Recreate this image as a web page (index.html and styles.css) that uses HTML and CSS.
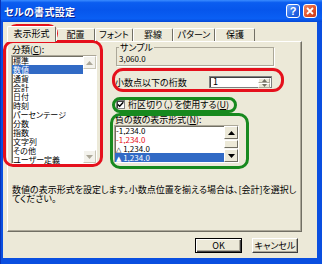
FILE: index.html
```html
<!DOCTYPE html>
<html lang="ja">
<head>
  <meta charset="UTF-8">
  <title>セルの書式設定</title>
  <link rel="stylesheet" href="styles.css">
</head>
<body>
  <div class="window">
    <div class="titlebar">
      <span class="title">セルの書式設定</span>
      <span class="tbtn help">?</span>
      <span class="tbtn close">
        <svg width="8" height="8" viewBox="0 0 8 8"><path d="M1 1L7 7M7 1L1 7" stroke="#fff" stroke-width="1.8"/></svg>
      </span>
    </div>
    <div class="client">
      <div class="tabs">
        <div class="tab active">表示形式</div>
        <div class="tab">配置</div>
        <div class="tab">フォント</div>
        <div class="tab">罫線</div>
        <div class="tab">パターン</div>
        <div class="tab">保護</div>
      </div>
      <div class="panel">
        <div class="cols">
          <div class="category">
            <div class="label">分類(<u>C</u>):</div>
            <div class="listbox cat-list">
              <ul class="items">
                <li>標準</li>
                <li class="sel">数値</li>
                <li>通貨</li>
                <li>会計</li>
                <li>日付</li>
                <li>時刻</li>
                <li>パーセンテージ</li>
                <li>分数</li>
                <li>指数</li>
                <li>文字列</li>
                <li>その他</li>
                <li>ユーザー定義</li>
              </ul>
              <div class="vscroll off">
                <span class="sbtn"><svg width="7" height="4" viewBox="0 0 7 4"><path d="M3.5 0L7 4H0z"/></svg></span>
                <span class="track"></span>
                <span class="sbtn"><svg width="7" height="4" viewBox="0 0 7 4"><path d="M0 0H7L3.5 4z"/></svg></span>
              </div>
            </div>
          </div>
          <div class="options">
            <fieldset class="sample">
              <legend>サンプル</legend>
              <div class="sample-value">3,060.0</div>
            </fieldset>
            <div class="decimal-row">
              <span>小数点以下の桁数</span>
              <div class="spin">
                <span class="spin-value">1</span>
                <span class="spin-btns">
                  <span class="sbtn"><svg width="5" height="3" viewBox="0 0 5 3"><path d="M2.5 0L5 3H0z"/></svg></span>
                  <span class="sbtn"><svg width="5" height="3" viewBox="0 0 5 3"><path d="M0 0H5L2.5 3z"/></svg></span>
                </span>
              </div>
            </div>
            <div class="check-row">
              <span class="checkbox">
                <svg width="7" height="7" viewBox="0 0 7 7"><path d="M0.8 3.4L2.7 5.3L6.3 1.3" fill="none" stroke="#000" stroke-width="1.4"/></svg>
              </span>
              <span>桁区切り（,）を使用する(<u>U</u>)</span>
            </div>
            <div class="neg-label">負の数の表示形式(<u>N</u>):</div>
            <div class="listbox neg-list">
              <ul class="items">
                <li>-1,234.0</li>
                <li class="red">-1,234.0</li>
                <li><span class="tri">△</span> 1,234.0</li>
                <li class="sel"><span class="tri">▲</span> 1,234.0</li>
              </ul>
              <div class="vscroll">
                <span class="sbtn"><svg width="7" height="4" viewBox="0 0 7 4"><path d="M3.5 0L7 4H0z"/></svg></span>
                <span class="track"><span class="thumb"></span></span>
                <span class="sbtn"><svg width="7" height="4" viewBox="0 0 7 4"><path d="M0 0H7L3.5 4z"/></svg></span>
              </div>
            </div>
          </div>
        </div>
        <p class="desc">数値の表示形式を設定します。小数点位置を揃える場合は、[会計]を選択し<br>てください。</p>
      </div>
      <div class="buttons">
        <button class="btn default">OK</button>
        <button class="btn">キャンセル</button>
      </div>
    </div>
    <!-- annotation marks -->
    <div class="mark red mark-tab"></div>
    <div class="mark red mark-list"></div>
    <div class="mark red mark-decimal"></div>
    <div class="mark green mark-check"></div>
    <div class="mark green mark-neg"></div>
  </div>
</body>
</html>
```

FILE: styles.css
```css
* { box-sizing: border-box; }
body { margin: 0; font-family: "Noto Sans CJK JP", "Liberation Sans", sans-serif; font-size: 9px; color: #000; font-feature-settings: "palt"; }
u { text-decoration: underline; }

.window { position: relative; width: 322px; height: 264px; background: #0A4FE0; border-left: 1px solid #0832B8; display: flex; flex-direction: column; overflow: hidden; }
.titlebar { height: 22px; flex: none; display: flex; align-items: center; padding: 0 5px 0 3px; background: linear-gradient(#3A8CFF 0%, #0B5DF0 12%, #0656EC 45%, #0A5FF4 85%, #0447D6 100%); }
.title { flex: 1; color: #fff; font-weight: bold; font-size: 10px; text-shadow: 1px 1px #0A1E8C; letter-spacing: 0.3px; }
.tbtn { width: 14px; height: 14px; border: 1px solid #fff; border-radius: 3px; display: flex; align-items: center; justify-content: center; color: #fff; font: bold 11px "Liberation Sans", sans-serif; margin-left: 3px; }
.help { background: linear-gradient(135deg, #6FA4FF, #2265E6 60%, #1A52D0); }
.close { background: linear-gradient(135deg, #F08A68, #E2532B 55%, #C8381A); }

.client { flex: 1; margin: 0 5px 6px 2px; background: #ECE9D8; padding: 4px 0 0 4px; }

.tabs { display: grid; grid-template-columns: 49px 39px 38px 40px 42px 40px; height: 15px; align-items: end; position: relative; z-index: 1; }
.tab { height: 13px; border: 1px solid; border-color: #fff #716F64 transparent #fff; border-bottom: none; text-align: center; line-height: 11px; white-space: nowrap; border-radius: 2px 2px 0 0; }
.tab.active { height: 16px; margin-bottom: -1px; background: #ECE9D8; line-height: 13px; }

.panel { width: 295px; height: 191px; border: 1px solid; border-color: #fff #716F64 #716F64 #fff; box-shadow: inset -1px -1px #ACA899; padding: 1px 3px 0 3px; }
.cols { display: flex; }
.category { width: 86px; }
.category .label { margin-top: 1px; line-height: 11px; padding-left: 1px; }

.listbox { display: flex; background: #fff; border: 1px solid; border-color: #ACA899 #fff #fff #ACA899; box-shadow: inset 1px 1px #716F64; }
.items { flex: 1; list-style: none; margin: 0; padding: 0; font-size: 8px; }
.items li { height: 9px; line-height: 9px; padding-left: 1px; white-space: nowrap; overflow: hidden; }
.items li.sel { background: #316AC5; color: #fff; }
.items li.red { color: #E8101A; }
.tri { font-family: "DejaVu Sans", sans-serif; font-size: 7px; }
.cat-list { height: 109px; }
.cat-list .vscroll { width: 13px; }

.vscroll { display: flex; flex-direction: column; background: #F4F3EE; }
.vscroll .sbtn { height: 13px; flex: none; display: flex; align-items: center; justify-content: center; background: #ECE9D8; border: 1px solid; border-color: #fff #716F64 #716F64 #fff; }
.vscroll .track { flex: 1; display: flex; background: #F6F5F0; }
.vscroll.off .sbtn { background: #F3F2EC; border-color: #fff #C9C6B6 #C9C6B6 #fff; }
.vscroll.off svg { fill: #ACA899; }
.vscroll.off .track { background: #fff; }
.thumb { flex: 1; margin: 1px 0; background: #ECE9D8; border: 1px solid; border-color: #fff #716F64 #716F64 #fff; }

.options { margin-left: 17px; width: 160px; }
.sample { margin: 0 0 0 2px; width: 158px; padding: 2px 0 2px 2px; border: 1px solid #ACA899; box-shadow: 1px 1px #fff; }
.sample legend { padding: 0 1px; margin-left: 0; line-height: 9px; }
.sample-value { line-height: 9px; font-size: 8px; }

.decimal-row { display: flex; justify-content: space-between; align-items: center; width: 158px; height: 12px; margin-top: 10px; padding-left: 1px; }
.spin { width: 63px; height: 12px; display: flex; background: #fff; border: 1px solid #7F7F7F; box-shadow: inset 1px 1px #404040; }
.spin-value { flex: 1; line-height: 10px; padding-left: 3px; }
.spin-btns { width: 13px; display: flex; flex-direction: column; padding: 1px 1px 1px 0; }
.spin-btns .sbtn { flex: 1; display: flex; align-items: center; justify-content: center; background: #ECE9D8; border: 1px solid; border-color: #fff #ACA899 #ACA899 #fff; }
.spin-btns svg { fill: #716F64; }

.check-row { display: flex; align-items: center; gap: 3px; height: 9px; margin-top: 12px; padding-left: 2px; white-space: nowrap; }
.checkbox { width: 9px; height: 9px; display: flex; align-items: center; justify-content: center; background: #fff; border: 1px solid #7F7F7F; box-shadow: inset 1px 1px #404040; }

.neg-label { margin-top: 6px; line-height: 9px; padding-left: 1px; }
.neg-list { height: 38px; width: 125px; margin-top: 1px; }
.neg-list .vscroll { width: 14px; }

.desc { margin: 21px 0 0 0; padding-left: 1px; line-height: 9px; white-space: nowrap; }

.buttons { display: flex; justify-content: flex-end; gap: 10px; width: 295px; padding-right: 4px; margin-top: 6px; }
.btn { height: 15px; width: 46px; padding: 0; font: 9px "Noto Sans CJK JP", sans-serif; font-feature-settings: "palt"; color: #000; background: #ECE9D8; border: 1px solid; border-color: #fff #404040 #404040 #fff; box-shadow: inset -1px -1px #ACA899; }
.btn.default { width: 47px; border-color: #000; box-shadow: inset 1px 1px #fff, inset -1px -1px #404040, inset -2px -2px #ACA899; }

.mark { position: absolute; border: 3px solid; pointer-events: none; }
.mark.red { border-color: #E5101C; }
.mark.green { border-color: #17891E; }
.mark-tab { left: 6px; top: 24px; width: 51px; height: 19px; border-radius: 10px; }
.mark-list { left: 2px; top: 40px; width: 100px; height: 127px; border-radius: 10px; }
.mark-decimal { left: 111px; top: 68px; width: 172px; height: 24px; border-radius: 11px; }
.mark-check { left: 111px; top: 97px; width: 125px; height: 16px; border-radius: 8px; }
.mark-neg { left: 109px; top: 113px; width: 139px; height: 56px; border-radius: 10px; }
```
